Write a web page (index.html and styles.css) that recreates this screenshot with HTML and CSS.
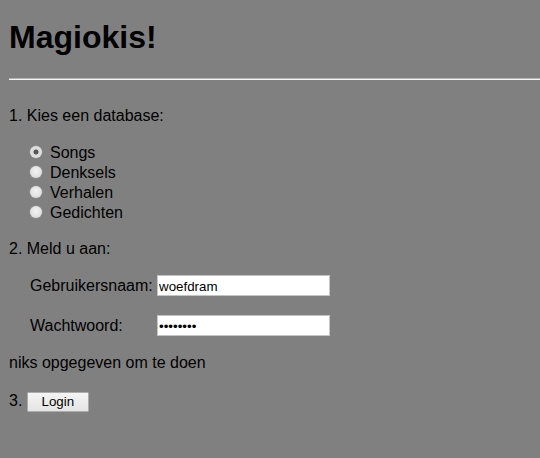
FILE: index.html
```html
<!DOCTYPE html>
<html lang="nl">
<head>
<meta charset="utf-8">
<title>Magiokis!</title>
<link rel="stylesheet" href="styles.css">
</head>
<body>
<h1 class="title">Magiokis!</h1>
<hr class="rule">
<form class="login-form">
  <p class="step step-first">1. Kies een database:</p>
  <ul class="db-list">
    <li><label class="db-option"><input type="radio" name="db" value="songs" class="radio" checked><span>Songs</span></label></li>
    <li><label class="db-option"><input type="radio" name="db" value="denksels" class="radio"><span>Denksels</span></label></li>
    <li><label class="db-option"><input type="radio" name="db" value="verhalen" class="radio"><span>Verhalen</span></label></li>
    <li><label class="db-option"><input type="radio" name="db" value="gedichten" class="radio"><span>Gedichten</span></label></li>
  </ul>
  <p class="step">2. Meld u aan:</p>
  <div class="cred-grid">
    <label class="cred-label" for="user">Gebruikersnaam:</label>
    <input class="field" id="user" type="text" value="woefdram">
    <label class="cred-label" for="pass">Wachtwoord:</label>
    <input class="field" id="pass" type="password" value="woefdram">
  </div>
  <p class="message">niks opgegeven om te doen</p>
  <p class="step step-last">3. <button type="button" class="btn">Login</button></p>
</form>
</body>
</html>
```

FILE: styles.css
```css
html, body {
  background: #808080;
}
body {
  margin: 0;
  padding: 0 0 0 9px;
  font-family: "Liberation Sans", Arial, sans-serif;
  font-size: 16px;
  line-height: 20px;
  color: #000;
}
.title {
  margin: 19px 0 0 0;
  font-size: 32px;
  line-height: 37px;
  font-weight: bold;
}
.rule {
  margin: 22px 0 0 0;
  height: 0;
  border: 0;
  border-top: 1px solid #b4b4b4;
  border-bottom: 1px solid #f4f4f4;
}
.login-form {
  margin: 0;
}
.step {
  margin: 16px 0 0 0;
}
.step-first {
  margin-top: 26px;
}
.db-list {
  list-style: none;
  margin: 17px 0 0 0;
  padding: 0 0 0 21px;
}
.db-option {
  display: flex;
  align-items: center;
  gap: 8px;
}
.radio {
  appearance: none;
  -webkit-appearance: none;
  margin: 0;
  width: 12px;
  height: 12px;
  border-radius: 50%;
  background: radial-gradient(circle at 50% 40%, #f2f2f2 0%, #e2e2e2 60%, #cfcfcf 100%);
  box-shadow: 0 0 0 0.5px #9a9a9a;
  position: relative;
  top: -1px;
}
.radio:checked {
  background: radial-gradient(circle, #555 0, #5a5a5a 2.2px, #d8d8d8 2.8px, #ececec 100%);
}
.cred-grid {
  display: grid;
  grid-template-columns: 127px 173px;
  align-items: baseline;
  row-gap: 19px;
  margin: 16px 0 0 21px;
}
.cred-label {
  display: block;
}
.field {
  box-sizing: border-box;
  width: 173px;
  height: 21px;
  margin: 0;
  padding: 1px 2px 0 1px;
  border: 1px solid #c4c4c4;
  background: #fff;
  font-family: "Liberation Sans", Arial, sans-serif;
  font-size: 13.33px;
  color: #000;
  outline: none;
}
.message {
  margin: 17px 0 0 0;
}
.step-last {
  margin-top: 18px;
}
.btn {
  box-sizing: border-box;
  width: 62px;
  height: 20px;
  margin: 0;
  padding: 0;
  border: 1px solid #acacac;
  border-radius: 1px;
  background: linear-gradient(#f4f4f4, #e4e4e4);
  font-family: "Liberation Sans", Arial, sans-serif;
  font-size: 13.33px;
  color: #000;
  vertical-align: baseline;
}
```
